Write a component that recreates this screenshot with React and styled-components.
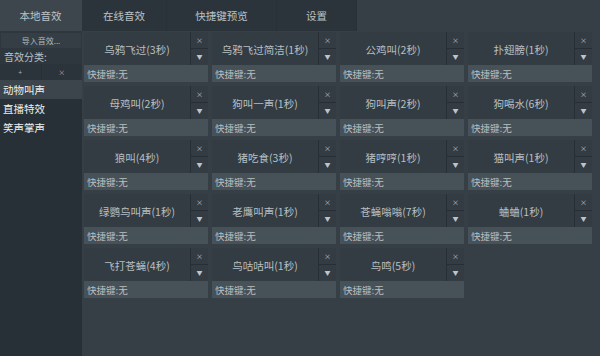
import React from 'react'
import styled, { createGlobalStyle } from 'styled-components'

const GlobalStyle = createGlobalStyle`
  html, body {
    margin: 0;
    padding: 0;
    background: #353f45;
  }
  body {
    font-family: "Noto Sans CJK SC", "Noto Sans", sans-serif;
    color: #c9ced1;
  }
`

// layout
const Page = styled.div`
  width: 600px;
  height: 356px;
  display: grid;
  grid-template-rows: 31px 1fr;
  background: #353f45;
  overflow: hidden;
`

const TabBar = styled.div`
  display: flex;
`

const Tabs = styled.div`
  display: flex;
  width: 357px;
  background: #2b343a;
`

const Tab = styled.div`
  width: ${p => p.w}px;
  display: flex;
  align-items: center;
  justify-content: center;
  font-size: 10.5px;
  color: #bcc2c5;
  background: ${p => (p.active ? '#3c464c' : 'transparent')};
  border-right: 1px solid ${p => (p.active ? '#3c464c' : '#283136')};
  box-sizing: border-box;
`

const Body = styled.div`
  display: grid;
  grid-template-columns: 82px 1fr;
  min-height: 0;
`

const Sidebar = styled.div`
  background: #273036;
  display: flex;
  flex-direction: column;
`

const SideTop = styled.div`
  background: #2e373d;
  padding-top: 2px;
  display: flex;
  flex-direction: column;
`

const ImportButton = styled.div`
  height: 15px;
  margin: 0 1px;
  background: #343e44;
  font-size: 8px;
  color: #b3b9bd;
  display: flex;
  align-items: center;
  justify-content: center;
`

const Label = styled.div`
  height: 16px;
  font-size: 10px;
  color: #bcc2c5;
  padding-left: 4px;
  display: flex;
  align-items: center;
`

const MiniRow = styled.div`
  display: grid;
  grid-template-columns: 1fr 1fr;
  gap: 1px;
  height: 16px;
  background: #262f35;
`

const MiniButton = styled.div`
  background: #2b343a;
  display: flex;
  align-items: center;
  justify-content: center;
  font-size: 7px;
  color: #a9afb3;
`

const CatItem = styled.div`
  height: 19px;
  display: flex;
  align-items: center;
  padding-left: 3px;
  font-size: 10.5px;
  color: #eef0f1;
  background: ${p => (p.active ? '#3b454b' : 'transparent')};
`

const Grid = styled.div`
  display: grid;
  grid-template-columns: repeat(4, 124px);
  grid-auto-rows: 50px;
  gap: 4px;
  padding: 1px 0 0 2px;
  align-content: start;
`

const Card = styled.div`
  display: grid;
  grid-template-rows: 33px 17px;
  background: #272f35;
`

const CardTop = styled.div`
  display: grid;
  grid-template-columns: 1fr 17px;
  gap: 1px;
`

const Title = styled.div`
  background: #323c42;
  display: flex;
  align-items: center;
  justify-content: center;
  font-size: 10.5px;
  color: #b9bfc2;
  padding-top: 1px;
`

const Side = styled.div`
  display: grid;
  grid-template-rows: 1fr 1fr;
  gap: 1px;
`

const SideButton = styled.div`
  background: #323c42;
  display: flex;
  align-items: center;
  justify-content: center;
  font-size: ${p => p.size}px;
  line-height: 1;
  color: #bfc4c7;
`

const Hotkey = styled.div`
  background: #475158;
  font-size: 9.5px;
  color: #b9bfc2;
  display: flex;
  align-items: center;
  padding-left: 3px;
`

const sounds = [
  '乌鸦飞过(3秒)', '乌鸦飞过简洁(1秒)', '公鸡叫(2秒)', '扑翅膀(1秒)',
  '母鸡叫(2秒)', '狗叫一声(1秒)', '狗叫声(2秒)', '狗喝水(6秒)',
  '狼叫(4秒)', '猪吃食(3秒)', '猪哼哼(1秒)', '猫叫声(1秒)',
  '绿鹦鸟叫声(1秒)', '老鹰叫声(1秒)', '苍蝇嗡嗡(7秒)', '蛐蛐(1秒)',
  '飞打苍蝇(4秒)', '鸟咕咕叫(1秒)', '鸟鸣(5秒)'
]

const tabs = [
  { name: '本地音效', w: 82, active: true },
  { name: '在线音效', w: 85 },
  { name: '快捷键预览', w: 110 },
  { name: '设置', w: 80 }
]

const categories = ['动物叫声', '直播特效', '笑声掌声']

const SoundCard = ({ name }) => (
  <Card>
    <CardTop>
      <Title>{name}</Title>
      <Side>
        <SideButton size={7}>×</SideButton>
        <SideButton size={6}>▼</SideButton>
      </Side>
    </CardTop>
    <Hotkey>快捷键:无</Hotkey>
  </Card>
)

const App = () => {
  return (
    <Page>
      <GlobalStyle />
      <TabBar>
        <Tabs>
          {tabs.map(t => (
            <Tab key={t.name} w={t.w} active={t.active}>{t.name}</Tab>
          ))}
        </Tabs>
      </TabBar>
      <Body>
        <Sidebar>
          <SideTop>
            <ImportButton>导入音效...</ImportButton>
            <Label>音效分类:</Label>
            <MiniRow>
              <MiniButton>+</MiniButton>
              <MiniButton>×</MiniButton>
            </MiniRow>
          </SideTop>
          {categories.map((c, i) => (
            <CatItem key={c} active={i === 0}>{c}</CatItem>
          ))}
        </Sidebar>
        <Grid>
          {sounds.map(s => <SoundCard key={s} name={s} />)}
        </Grid>
      </Body>
    </Page>
  )
}

export default App
